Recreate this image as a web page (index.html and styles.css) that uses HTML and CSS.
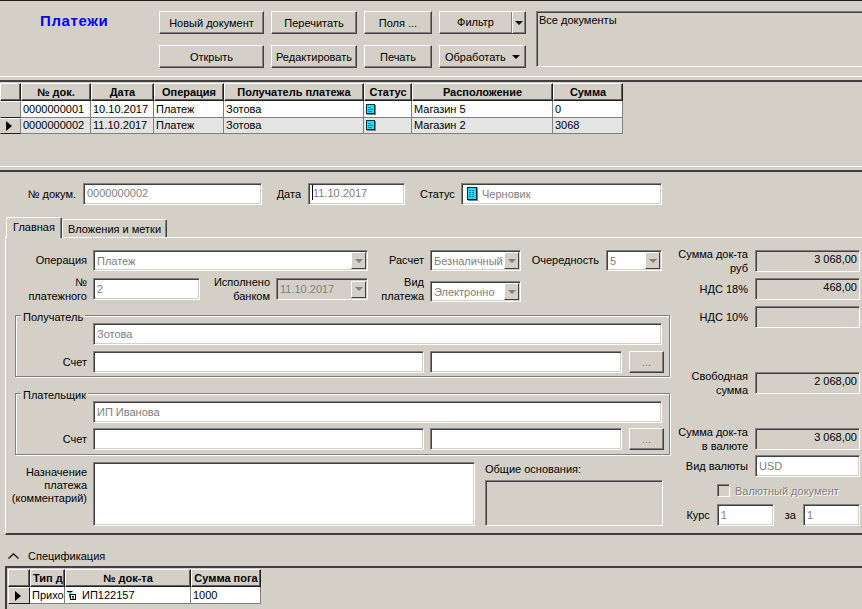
FILE: index.html
```html
<!DOCTYPE html>
<html lang="ru">
<head>
    <meta charset="UTF-8">
    <meta name="viewport" content="width=device-width, initial-scale=1.0">
    <title>Платежи</title>
    <link rel="stylesheet" href="styles.css">
</head>
<body>
    <div class="window">
        <!-- Toolbar -->
        <div class="toolbar">
            <h1 class="page-title">Платежи</h1>
            <div class="toolbar-buttons">
                <button class="btn">Новый документ</button>
                <button class="btn">Перечитать</button>
                <button class="btn">Поля ...</button>
                <div class="btn split-btn"><span class="split-label">Фильтр</span><span class="split-arrow"><i class="arrow"></i></span></div>
                <button class="btn">Открыть</button>
                <button class="btn">Редактировать</button>
                <button class="btn">Печать</button>
                <div class="btn menu-btn">Обработать <i class="arrow"></i></div>
            </div>
            <div class="filter-memo sunken">Все документы</div>
        </div>

        <!-- Documents grid -->
        <div class="grid-area docs-area">
            <div class="data-grid docs-grid">
                <div class="cell head"></div>
                <div class="cell head">№ док.</div>
                <div class="cell head">Дата</div>
                <div class="cell head">Операция</div>
                <div class="cell head">Получатель платежа</div>
                <div class="cell head">Статус</div>
                <div class="cell head">Расположение</div>
                <div class="cell head">Сумма</div>

                <div class="cell indicator"></div>
                <div class="cell">0000000001</div>
                <div class="cell">10.10.2017</div>
                <div class="cell">Платеж</div>
                <div class="cell">Зотова</div>
                <div class="cell">
                    <svg class="status-icon" width="10" height="11" viewBox="0 0 10 11">
                        <rect x="1" y="1" width="9" height="10" fill="#808080"/>
                        <rect x="0.5" y="0.5" width="8" height="9" fill="#19e3f0" stroke="#00303a"/>
                        <path d="M2 3.5 H5 M2 5.5 H7 M2 7.5 H6" stroke="#0a8fb0"/>
                    </svg>
                </div>
                <div class="cell">Магазин 5</div>
                <div class="cell">0</div>

                <div class="cell indicator"><i class="row-arrow"></i></div>
                <div class="cell selected">0000000002</div>
                <div class="cell selected">11.10.2017</div>
                <div class="cell selected">Платеж</div>
                <div class="cell selected">Зотова</div>
                <div class="cell selected">
                    <svg class="status-icon" width="10" height="11" viewBox="0 0 10 11">
                        <rect x="1" y="1" width="9" height="10" fill="#808080"/>
                        <rect x="0.5" y="0.5" width="8" height="9" fill="#19e3f0" stroke="#00303a"/>
                        <path d="M2 3.5 H5 M2 5.5 H7 M2 7.5 H6" stroke="#0a8fb0"/>
                    </svg>
                </div>
                <div class="cell selected">Магазин 2</div>
                <div class="cell selected">3068</div>
            </div>
        </div>

        <!-- Document header -->
        <div class="doc-header">
            <label class="doc-label label-num">№ докум.</label>
            <div class="field sunken field-num">0000000002</div>
            <label class="doc-label label-date">Дата</label>
            <div class="field sunken field-date"><span class="caret"></span>11.10.2017</div>
            <label class="doc-label label-status">Статус</label>
            <div class="field sunken field-status">
                <svg class="status-large" width="11" height="14" viewBox="0 0 11 14">
                    <rect x="1" y="1" width="10" height="13" fill="#808080"/>
                    <rect x="0.5" y="0.5" width="9" height="12" fill="#19e3f0" stroke="#00202a"/>
                    <path d="M2 3.5 H8 M2 5.5 H8 M2 7.5 H8 M2 9.5 H7" stroke="#0a6fd0" stroke-dasharray="2 1"/>
                </svg>Черновик
            </div>
        </div>

        <!-- Tabs -->
        <div class="tabs">
            <div class="tab active">Главная</div>
            <div class="tab second">Вложения и метки</div>
        </div>

        <div class="tab-panel">
            <div class="main-col">
                <div class="form-row row-operation">
                    <label class="lbl lbl-main">Операция</label>
                    <div class="field sunken combo w-operation">Платеж<span class="combo-btn"><i class="arrow"></i></span></div>
                    <label class="lbl lbl-calc">Расчет</label>
                    <div class="field sunken combo w-calc">Безналичный<span class="combo-btn"><i class="arrow"></i></span></div>
                    <label class="lbl lbl-order">Очередность</label>
                    <div class="field sunken combo w-order">5<span class="combo-btn"><i class="arrow"></i></span></div>
                </div>
                <div class="form-row row-number">
                    <label class="lbl lbl-main">№<br>платежного</label>
                    <div class="field sunken w-number">2</div>
                    <label class="lbl lbl-bank">Исполнено<br>банком</label>
                    <div class="field sunken combo disabled w-bank">11.10.2017<span class="combo-btn"><i class="arrow"></i></span></div>
                    <label class="lbl lbl-calc">Вид<br>платежа</label>
                    <div class="field sunken combo w-calc combo-low">Электронно<span class="combo-btn"><i class="arrow"></i></span></div>
                </div>

                <fieldset class="group group-first">
                    <legend>Получатель</legend>
                    <div class="field sunken w-party">Зотова</div>
                    <div class="account-row">
                        <label class="lbl lbl-account">Счет</label>
                        <div class="field sunken w-acc1"></div>
                        <div class="field sunken w-acc2"></div>
                        <div class="dots-btn">...</div>
                    </div>
                </fieldset>

                <fieldset class="group group-second">
                    <legend>Плательщик</legend>
                    <div class="field sunken w-party">ИП Иванова</div>
                    <div class="account-row">
                        <label class="lbl lbl-account">Счет</label>
                        <div class="field sunken w-acc1"></div>
                        <div class="field sunken w-acc2"></div>
                        <div class="dots-btn">...</div>
                    </div>
                </fieldset>

                <div class="purpose-row">
                    <label class="lbl lbl-main lbl-purpose">Назначение<br>платежа<br>(комментарий)</label>
                    <div class="field sunken w-purpose"></div>
                    <div class="basis">
                        <div class="basis-title">Общие основания:</div>
                        <div class="sunken basis-box"></div>
                    </div>
                </div>
            </div>

            <div class="totals-col">
                <div class="total-row">
                    <label class="lbl total-lbl">Сумма док-та<br>руб</label>
                    <div class="sunken total-box">3 068,00</div>
                </div>
                <div class="total-row gap-6">
                    <label class="lbl total-lbl">НДС 18%</label>
                    <div class="sunken total-box">468,00</div>
                </div>
                <div class="total-row gap-6">
                    <label class="lbl total-lbl">НДС 10%</label>
                    <div class="sunken total-box"></div>
                </div>
                <div class="total-row gap-44">
                    <label class="lbl total-lbl">Свободная<br>сумма</label>
                    <div class="sunken total-box">2 068,00</div>
                </div>
                <div class="total-row gap-34">
                    <label class="lbl total-lbl">Сумма док-та<br>в валюте</label>
                    <div class="sunken total-box">3 068,00</div>
                </div>
                <div class="total-row gap-5">
                    <label class="lbl total-lbl">Вид валюты</label>
                    <div class="field sunken total-input">USD</div>
                </div>
                <div class="currency-check">
                    <span class="check-box sunken"></span>
                    <span class="check-text">Валютный документ</span>
                </div>
                <div class="rate-row">
                    <label class="lbl">Курс</label>
                    <div class="field sunken rate-field">1</div>
                    <label class="lbl rate-for">за</label>
                    <div class="field sunken rate-field">1</div>
                </div>
            </div>
        </div>

        <!-- Specification -->
        <div class="spec-title">
            <svg class="chevron" width="11" height="6" viewBox="0 0 11 6"><path d="M0.5 5.5 L5.5 0.8 L10.5 5.5" fill="none" stroke="#000" stroke-width="1.2"/></svg>
            <span>Спецификация</span>
        </div>
        <div class="grid-area spec-area">
            <div class="data-grid spec-grid">
                <div class="cell head"></div>
                <div class="cell head clip">Тип д</div>
                <div class="cell head">№ док-та</div>
                <div class="cell head">Сумма пога</div>

                <div class="cell indicator"><i class="row-arrow"></i></div>
                <div class="cell">Прихо</div>
                <div class="cell">
                    <svg class="tree-icon" width="9" height="9" viewBox="0 0 9 9">
                        <path d="M0 0.5 H5.5" stroke="#000"/>
                        <path d="M0.5 1 H5 L2.75 3.5 Z" fill="#19d6c4"/>
                        <path d="M2.5 3 V6.5 H3" fill="none" stroke="#555"/>
                        <rect x="3.5" y="3.5" width="5" height="5" fill="#fff" stroke="#000"/>
                        <path d="M5 5.5 H7 M5 7 H7" stroke="#000"/>
                    </svg>ИП122157
                </div>
                <div class="cell">1000</div>
            </div>
        </div>
    </div>
</body>
</html>
```

FILE: styles.css
```css
* {
    box-sizing: border-box;
    margin: 0;
    padding: 0;
}

html, body {
    height: 100%;
    overflow: hidden;
}

body {
    font-family: "Liberation Sans", Arial, sans-serif;
    font-size: 11px;
    color: #000;
    background-color: #d4d0c8;
}

.window {
    width: 862px;
    height: 609px;
    border-top: 1px solid #202020;
    overflow: hidden;
}

.sunken {
    background-color: #fff;
    border: 1px solid;
    border-color: #808080 #fff #fff #808080;
    box-shadow: inset 1px 1px 0 #404040, inset -1px -1px 0 #d4d0c8;
}

/* Toolbar */
.toolbar {
    display: flex;
    height: 76px;
    padding-top: 10px;
    border-bottom: 1px solid #fff;
}

.page-title {
    width: 159px;
    padding: 1px 0 0 40px;
    font-size: 15px;
    letter-spacing: 0.6px;
    font-weight: bold;
    color: #0000ff;
}

.toolbar-buttons {
    display: grid;
    grid-template-columns: 105px 86px 68px 87px;
    grid-template-rows: 23px 23px;
    column-gap: 7px;
    row-gap: 11px;
}

.btn {
    font-family: inherit;
    font-size: 11px;
    color: #000;
    background-color: #d4d0c8;
    border: 1px solid;
    border-color: #fff #404040 #404040 #fff;
    box-shadow: inset -1px -1px 0 #808080;
    display: flex;
    align-items: center;
    justify-content: center;
}

.split-btn {
    justify-content: flex-start;
}

.split-label {
    width: 72px;
    text-align: center;
    height: 100%;
    line-height: 21px;
    border-right: 1px solid #808080;
    box-shadow: 1px 0 0 #fff;
}

.split-arrow {
    flex: 1;
    display: flex;
    justify-content: center;
    padding-left: 1px;
}

.menu-btn {
    justify-content: flex-start;
    padding-left: 5px;
}

.menu-btn .arrow {
    margin-left: auto;
    margin-right: 5px;
}

.arrow {
    display: inline-block;
    width: 0;
    height: 0;
    border-left: 4px solid transparent;
    border-right: 4px solid transparent;
    border-top: 4px solid #000;
}

.filter-memo {
    flex: 1;
    height: 56px;
    margin-left: 10px;
    padding: 2px 0 0 2px;
    background-color: #d4d0c8;
    border-right: none;
}

/* Data grids */
.grid-area {
    border-top: 2px solid #404040;
}

.docs-area {
    height: 87px;
    margin-top: 3px;
    padding-top: 1px;
    border-bottom: 1px solid #fff;
}

.data-grid {
    display: grid;
    width: max-content;
}

.docs-grid {
    grid-template-columns: 21px 70px 63px 70px 140px 48px 141px 70px;
    grid-template-rows: 18px 17px 16px;
}

.spec-grid {
    grid-template-columns: 22px 35px 126px 70px;
    grid-template-rows: 18px 17px;
}

.cell {
    padding-left: 2px;
    line-height: 15px;
    white-space: nowrap;
    overflow: hidden;
    background-color: #fff;
    border-right: 1px solid #808080;
    border-bottom: 1px solid #808080;
    display: flex;
    align-items: center;
}

.cell.head {
    font-weight: bold;
    justify-content: center;
    padding-left: 0;
    background-color: #d4d0c8;
    border: 1px solid;
    border-color: #fff #202020 #202020 #fff;
    box-shadow: inset -1px -1px 0 #606060;
}

.cell.head.clip {
    justify-content: flex-start;
    padding-left: 2px;
}

.cell.indicator {
    padding-left: 5px;
    background-color: #d4d0c8;
    border-color: #fff #808080 #202020 #d4d0c8;
    border-style: solid;
    border-width: 1px;
}

.spec-grid .cell.indicator {
    padding-left: 6px;
    border-color: #fff #202020 #202020 #fff;
}

.cell.selected {
    background-color: #e4e4e4;
}

.row-arrow {
    display: block;
    width: 0;
    height: 0;
    border-top: 5px solid transparent;
    border-bottom: 5px solid transparent;
    border-left: 6px solid #000;
}

.status-icon {
    display: block;
}

.status-large {
    margin: 0 4px 0 2px;
    flex: none;
}

/* Document header */
.doc-header {
    display: flex;
    align-items: center;
    height: 24px;
    margin-top: 3px;
    padding-top: 10px;
    border-top: 2px solid #404040;
    box-sizing: content-box;
}

.doc-label {
    text-align: right;
    flex: none;
}

.label-num {
    width: 76px;
    margin-right: 7px;
}

.label-date {
    width: 25px;
    margin: 0 7px 0 14px;
}

.label-status {
    width: 34px;
    margin: 0 7px 0 15px;
}

.field {
    display: flex;
    align-items: center;
    height: 22px;
    padding-left: 3px;
    color: #808080;
    flex: none;
}

.field-num {
    width: 179px;
    padding-bottom: 3px;
}

.field-date {
    width: 97px;
    padding-bottom: 3px;
}

.field-status {
    width: 201px;
}

.caret {
    width: 1px;
    height: 15px;
    background-color: #000;
}

/* Tabs */
.tabs {
    display: flex;
    align-items: flex-end;
    height: 21px;
    margin-top: 10px;
    padding-left: 6px;
}

.tab {
    text-align: center;
    border: 1px solid;
    border-color: #fff #404040 transparent #fff;
    border-bottom: none;
    border-radius: 2px 2px 0 0;
    box-shadow: inset -1px 0 0 #808080;
}

.tab.second {
    width: 105px;
    height: 18px;
    line-height: 18px;
}

.tab.active {
    position: relative;
    margin-bottom: -1px;
    width: 56px;
    height: 21px;
    line-height: 19px;
    z-index: 1;
    background-color: #d4d0c8;
}

.tab-panel {
    display: flex;
    height: 298px;
    margin-left: 5px;
    border-top: 1px solid #fff;
    border-left: 1px solid #fff;
    border-bottom: 2px solid #404040;
}

.main-col {
    width: 669px;
    flex: none;
}

.form-row {
    display: flex;
    align-items: flex-start;
}

.row-operation {
    height: 21px;
    margin-top: 12px;
}

.row-number {
    height: 24px;
    margin-top: 7px;
}

.lbl {
    line-height: 14px;
    text-align: right;
    flex: none;
}

.lbl-main {
    width: 81px;
    margin-right: 6px;
}

.row-operation .lbl {
    line-height: 21px;
}

.row-number .lbl {
    margin-top: -3px;
}

.lbl-calc {
    width: 56px;
    margin-right: 6px;
}

.lbl-order {
    width: 78px;
    margin-right: 7px;
}

.lbl-bank {
    width: 70px;
    margin-right: 6px;
}

.w-operation {
    width: 275px;
}

.w-calc {
    width: 91px;
}

.w-order {
    width: 56px;
}

.w-number {
    width: 107px;
}

.w-bank {
    width: 92px;
}

.combo {
    height: 21px;
    padding-right: 1px;
}

.combo-low {
    margin-top: 3px;
}

.combo.disabled {
    background-color: #d4d0c8;
    height: 22px;
}

.combo-btn {
    margin-left: auto;
    width: 15px;
    height: 17px;
    display: flex;
    align-items: center;
    justify-content: center;
    flex: none;
    background-color: #d4d0c8;
    border: 1px solid;
    border-color: #fff #404040 #404040 #fff;
}

.combo-btn .arrow {
    border-top-color: #808080;
}

/* Group boxes */
.group {
    width: 655px;
    height: 62px;
    margin-left: 9px;
    border: 1px solid #808080;
    box-shadow: 1px 1px 0 #fff, inset 1px 1px 0 #fff;
    position: relative;
}

.group-first {
    margin-top: 13px;
}

.group-second {
    margin-top: 16px;
}

.group-second .account-row {
    margin-top: 5px;
}

.group legend {
    position: absolute;
    top: -6px;
    left: 5px;
    padding: 0 2px;
    line-height: 14px;
    background-color: #d4d0c8;
}

.w-party {
    width: 569px;
    margin: 7px 0 0 77px;
}

.account-row {
    display: flex;
    align-items: center;
    margin-top: 6px;
}

.lbl-account {
    width: 71px;
    margin-right: 6px;
}

.w-acc1 {
    width: 331px;
}

.w-acc2 {
    width: 192px;
    margin-left: 6px;
}

.dots-btn {
    width: 35px;
    height: 22px;
    margin-left: 7px;
    color: #808080;
    line-height: 20px;
    text-align: center;
    border: 1px solid;
    border-color: #fff #404040 #404040 #fff;
    box-shadow: inset -1px -1px 0 #808080;
}

.purpose-row {
    display: flex;
    margin-top: 7px;
}

.lbl-purpose {
    padding-top: 4px;
    line-height: 13px;
}

.w-purpose {
    width: 382px;
    height: 64px;
}

.basis {
    margin-left: 10px;
}

.basis-title {
    line-height: 14px;
}

.basis-box {
    width: 178px;
    height: 46px;
    margin-top: 4px;
    background-color: #d4d0c8;
}

/* Totals */
.totals-col {
    flex: 1;
    padding-top: 12px;
}

.total-row {
    display: flex;
    height: 22px;
    justify-content: flex-end;
    align-items: center;
    padding-right: 2px;
}

.total-lbl {
    margin-right: 7px;
}

.total-box {
    width: 105px;
    height: 22px;
    padding: 1px 2px 0 0;
    text-align: right;
    line-height: 14px;
    background-color: #d4d0c8;
    flex: none;
}

.total-input {
    width: 105px;
}

.gap-5 {
    margin-top: 5px;
}

.gap-6 {
    margin-top: 6px;
}

.gap-34 {
    margin-top: 34px;
}

.gap-44 {
    margin-top: 44px;
}

.currency-check {
    display: flex;
    align-items: center;
    gap: 5px;
    margin: 7px 0 0 42px;
    height: 13px;
}

.check-box {
    width: 13px;
    height: 13px;
    background-color: #d4d0c8;
}

.check-text {
    color: #808080;
    text-shadow: 1px 1px 0 #fff;
}

.rate-row {
    display: flex;
    align-items: center;
    justify-content: flex-end;
    margin-top: 7px;
    padding-right: 2px;
}

.rate-row .lbl {
    margin-right: 7px;
}

.rate-row .rate-for {
    margin: 0 7px 0 11px;
}

.rate-field {
    width: 57px;
}

/* Specification */
.spec-title {
    display: flex;
    align-items: center;
    height: 14px;
    margin-top: 14px;
    padding-left: 8px;
    gap: 9px;
}

.spec-area {
    margin: 3px 0 0 5px;
    padding: 1px 0 0 1px;
    border-left: 2px solid #404040;
    height: 60px;
}

.tree-icon {
    margin-right: 6px;
    flex: none;
}
```
